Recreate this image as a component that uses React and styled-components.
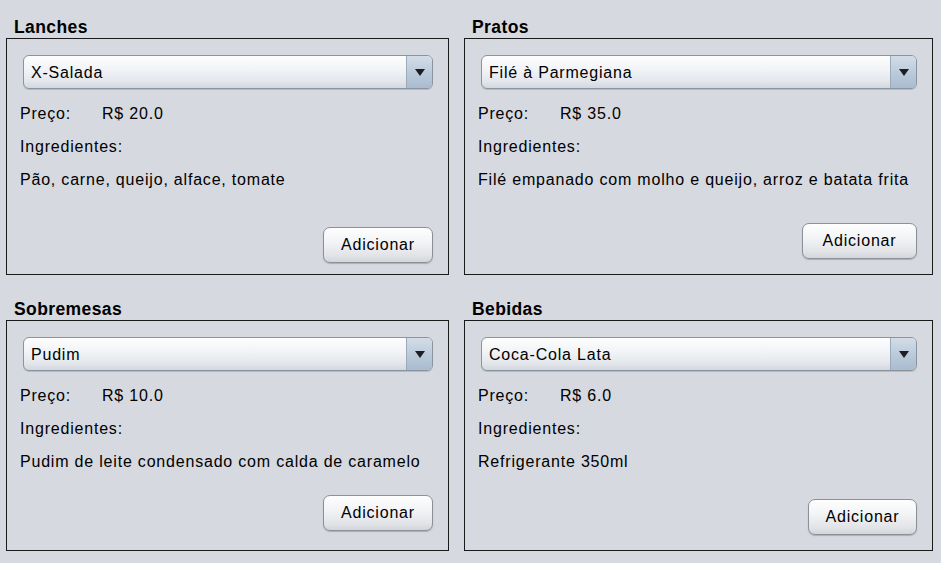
import React from "react";
import styled, { createGlobalStyle } from "styled-components";

const GlobalStyle = createGlobalStyle`
  html, body {
    margin: 0;
    padding: 0;
    background: #d6d9df;
  }
  body {
    font-family: "Liberation Sans", Arial, sans-serif;
    color: #000;
  }
`;

const menu = [
  {
    title: "Lanches",
    item: "X-Salada",
    price: "R$ 20.0",
    desc: "Pão, carne, queijo, alface, tomate",
    btnWidth: 110,
    btnBottom: 11,
  },
  {
    title: "Pratos",
    item: "Filé à Parmegiana",
    price: "R$ 35.0",
    desc: "Filé empanado com molho e queijo, arroz e batata frita",
    btnWidth: 115,
    btnBottom: 15,
  },
  {
    title: "Sobremesas",
    item: "Pudim",
    price: "R$ 10.0",
    desc: "Pudim de leite condensado com calda de caramelo",
    btnWidth: 110,
    btnBottom: 19,
  },
  {
    title: "Bebidas",
    item: "Coca-Cola Lata",
    price: "R$ 6.0",
    desc: "Refrigerante 350ml",
    btnWidth: 109,
    btnBottom: 15,
  },
];

const Page = styled.div`
  width: 941px;
  height: 563px;
  box-sizing: border-box;
  padding: 18px 0 0 6px;
  display: grid;
  grid-template-columns: 443px 469px;
  grid-template-rows: 257px 251px;
  column-gap: 15px;
  row-gap: 25px;
`;

const Section = styled.section`
  display: flex;
  flex-direction: column;
`;

const Title = styled.h2`
  margin: 0 0 2px 8px;
  font-size: 17.5px;
  line-height: 18px;
  font-weight: bold;
  letter-spacing: 0.4px;
`;

const Panel = styled.div`
  flex: 1;
  box-sizing: border-box;
  border: 1px solid #1a1a1a;
  padding: 16px 15px 0 13px;
  display: flex;
  flex-direction: column;
  font-size: 16px;
  letter-spacing: 0.8px;
`;

const Combo = styled.div`
  height: 34px;
  margin-left: 3px;
  box-sizing: border-box;
  border: 1px solid #8a939e;
  border-radius: 6px;
  display: flex;
  overflow: hidden;
  background: linear-gradient(#fdfdfe 0%, #f1f3f6 45%, #e2e6eb 80%, #d3d8de 100%);
  box-shadow: 0 1px 0 rgba(120, 130, 140, 0.35);
`;

const ComboText = styled.div`
  flex: 1;
  padding-left: 7px;
  line-height: 33px;
`;

const Arrow = styled.div`
  width: 25px;
  border-left: 1px solid #9aaabb;
  background: linear-gradient(#d3dde8 0%, #bccbdb 50%, #a9bccf 100%);
  display: flex;
  align-items: center;
  justify-content: center;

  &::after {
    content: "";
    border-left: 5px solid transparent;
    border-right: 5px solid transparent;
    border-top: 7px solid #1a1f26;
    margin-top: 1px;
  }
`;

const Row = styled.div`
  display: flex;
  line-height: 33px;
  margin-top: ${(p) => (p.$first ? "8px" : "0")};
  white-space: nowrap;
`;

const Label = styled.span`
  width: 82px;
`;

const Footer = styled.div`
  margin-top: auto;
  display: flex;
  justify-content: flex-end;
  padding-bottom: ${(p) => p.$bottom}px;
`;

const Button = styled.button`
  width: ${(p) => p.$width}px;
  height: 36px;
  box-sizing: border-box;
  border: 1px solid #8c9198;
  border-radius: 7px;
  background: linear-gradient(#fefefe 0%, #f3f4f6 40%, #e2e4e8 80%, #d3d6db 100%);
  box-shadow: 0 1px 1px rgba(90, 95, 105, 0.35);
  font-family: "Liberation Sans", Arial, sans-serif;
  font-size: 16px;
  letter-spacing: 0.8px;
  color: #000;
  padding: 0;
`;

const App = () => {
  return (
    <>
      <GlobalStyle />
      <Page>
        {menu.map((m) => (
          <Section key={m.title}>
            <Title>{m.title}</Title>
            <Panel>
              <Combo>
                <ComboText>{m.item}</ComboText>
                <Arrow />
              </Combo>
              <Row $first>
                <Label>Preço:</Label>
                <span>{m.price}</span>
              </Row>
              <Row>Ingredientes:</Row>
              <Row>{m.desc}</Row>
              <Footer $bottom={m.btnBottom}>
                <Button $width={m.btnWidth}>Adicionar</Button>
              </Footer>
            </Panel>
          </Section>
        ))}
      </Page>
    </>
  );
};

export default App;
